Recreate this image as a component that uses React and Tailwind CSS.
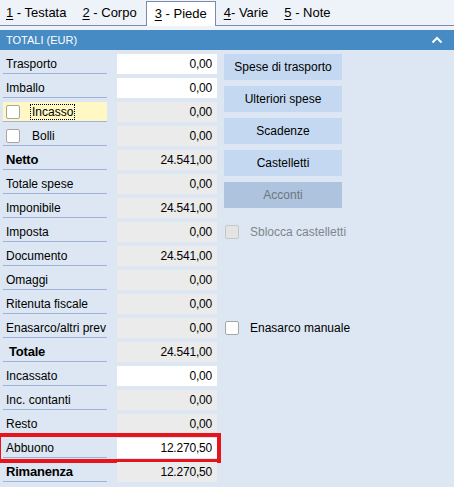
const rows = [
  { label: "Trasporto", value: "0,00", white: true },
  { label: "Imballo", value: "0,00", white: true },
  { label: "Incasso", value: "0,00", check: true, focus: true },
  { label: "Bolli", value: "0,00", check: true },
  { label: "Netto", value: "24.541,00", bold: true },
  { label: "Totale spese", value: "0,00" },
  { label: "Imponibile", value: "24.541,00" },
  { label: "Imposta", value: "0,00" },
  { label: "Documento", value: "24.541,00" },
  { label: "Omaggi", value: "0,00" },
  { label: "Ritenuta fiscale", value: "0,00" },
  { label: "Enasarco/altri prev", value: "0,00" },
  { label: "Totale", value: "24.541,00", bold: true, indent: true },
  { label: "Incassato", value: "0,00", white: true },
  { label: "Inc. contanti", value: "0,00" },
  { label: "Resto", value: "0,00" },
  { label: "Abbuono", value: "12.270,50", white: true, marked: true },
  { label: "Rimanenza", value: "12.270,50", bold: true },
];

const tabs = [
  { n: "1", text: " - Testata" },
  { n: "2", text: " - Corpo" },
  { n: "3", text: " - Piede", active: true },
  { n: "4", text: "- Varie" },
  { n: "5", text: " - Note" },
];

function Check({ disabled }) {
  return (
    <span
      className={`block w-[14px] h-[14px] shrink-0 rounded-[2px] border ${
        disabled ? "bg-[#e4e4e4] border-[#c8c8c8]" : "bg-white border-[#a6a6a6]"
      }`}
    />
  );
}

function Row({ r }) {
  return (
    <div className="relative flex h-5 items-stretch">
      <div
        className={`w-[104px] ml-[3px] flex items-center border-b border-[#9fb3d9] ${
          r.focus ? "bg-[#fff8c4]" : ""
        }`}
      >
        {r.check ? (
          <>
            <span className="ml-[3px]">
              <Check />
            </span>
            <span
              className={`ml-[11px] leading-[14px] px-px ${
                r.focus ? "outline outline-1 outline-dotted outline-black" : ""
              }`}
            >
              {r.label}
            </span>
          </>
        ) : (
          <span className={`${r.indent ? "pl-[6px]" : "pl-[3px]"} ${r.bold ? "font-bold text-[13px] tracking-[-0.2px]" : ""}`}>
            {r.label}
          </span>
        )}
      </div>
      <div
        className={`ml-[10px] w-[100px] flex items-center justify-end pr-[5px] tracking-[-0.2px] ${
          r.white ? "bg-white" : "bg-[#ebebeb]"
        }`}
      >
        {r.value}
      </div>
      {r.marked && (
        <div className="absolute left-[-3px] top-[-5px] w-[224px] h-[30px] border-4 border-[#e8141c] pointer-events-none" />
      )}
    </div>
  );
}

export default function App() {
  return (
    <div
      className="w-[454px] h-[487px] overflow-hidden bg-[#dce7f3] text-[12px] text-black"
      style={{ fontFamily: '"Liberation Sans", Arial, sans-serif' }}
    >
      <div className="h-[30px] bg-[#eef2f9]">
        <div className="relative h-[26px] flex items-end border-b border-[#7b8bab]">
          {tabs.map((t) => (
            <div
              key={t.n}
              className={`h-[24px] flex items-center text-[13px] ${
                t.active
                  ? "bg-white border border-b-0 border-[#7b8bab] px-[8px] mb-[-1px] h-[25px] mx-[1px]"
                  : "px-[8px]"
              } ${t.n === "1" ? "pl-[6px]" : ""} ${t.n === "4" ? "pl-[7px]" : ""}`}
            >
              <span className="underline underline-offset-2">{t.n}</span>
              <span className="whitespace-pre">{t.text}</span>
            </div>
          ))}
        </div>
      </div>
      <div className="h-5 bg-[#478bc4] flex items-center justify-between px-[6px] text-white text-[11px]">
        <span>TOTALI (EUR)</span>
        <svg width="12" height="8" viewBox="0 0 12 8" className="mr-[5px]">
          <path d="M1.5 6.5 L6 2 L10.5 6.5" fill="none" stroke="white" strokeWidth="2" />
        </svg>
      </div>
      <div className="flex pt-1">
        <div className="flex flex-col gap-1">
          {rows.map((r) => (
            <Row key={r.label} r={r} />
          ))}
        </div>
        <div className="ml-[7px] flex flex-col">
          {["Spese di trasporto", "Ulteriori spese", "Scadenze", "Castelletti"].map((b) => (
            <div
              key={b}
              className="w-[118px] h-[26px] mb-[6px] bg-[#c4d9f1] flex items-center justify-center"
            >
              {b}
            </div>
          ))}
          <div className="w-[118px] h-[26px] bg-[#adc3de] text-[#6e7680] flex items-center justify-center">
            Acconti
          </div>
          <div className="mt-[14px] h-5 flex items-center">
            <span className="ml-px">
              <Check disabled />
            </span>
            <span className="ml-[11px] text-[#7f858c]">Sblocca castelletti</span>
          </div>
          <div className="mt-[76px] h-5 flex items-center">
            <span className="ml-px">
              <Check />
            </span>
            <span className="ml-[11px]">Enasarco manuale</span>
          </div>
        </div>
      </div>
    </div>
  );
}
